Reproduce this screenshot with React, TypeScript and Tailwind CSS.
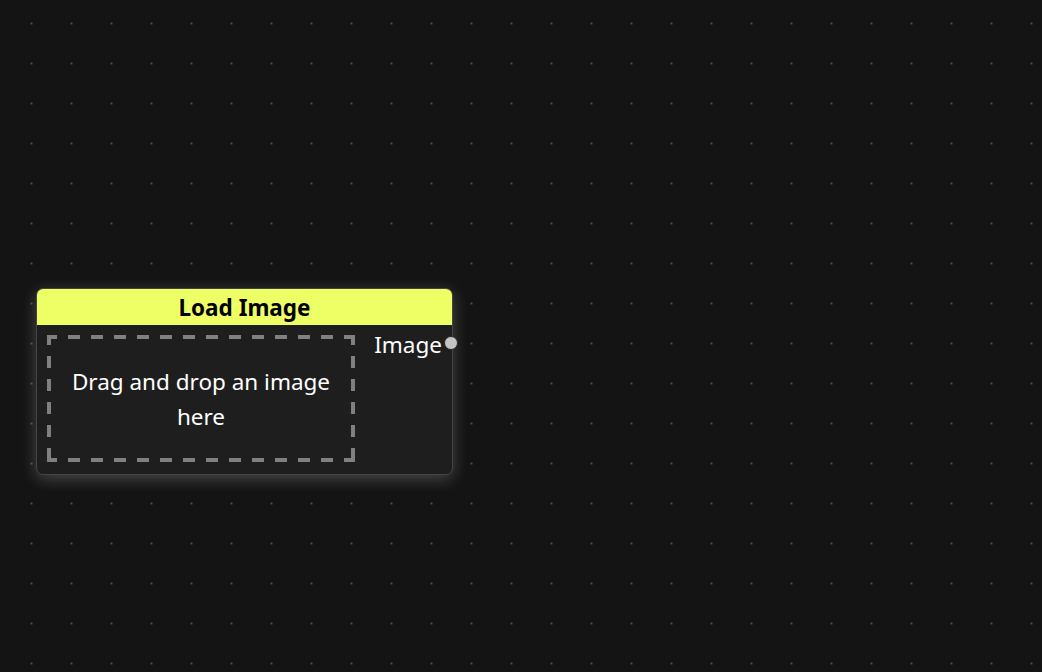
import React from "react";

function DashedFrame() {
  const w = 308;
  const h = 127;
  const s = 4;
  const o = s / 2;
  return (
    <svg className="absolute inset-0 pointer-events-none" width={w} height={h} viewBox={`0 0 ${w} ${h}`}>
      <g stroke="#808080" strokeWidth={s} fill="none" strokeDasharray="12 11" strokeDashoffset="2">
        <path d={`M0 ${o} H${w}`} />
        <path d={`M0 ${h - o} H${w}`} />
        <path d={`M${o} 0 V${h}`} />
        <path d={`M${w - o} 0 V${h}`} />
      </g>
    </svg>
  );
}

export default function App() {
  return (
    <div
      className="relative w-[1042px] h-[672px] overflow-hidden bg-[#141414] bg-[radial-gradient(circle,#4a4a4a_1px,transparent_1.2px)] bg-[length:40px_40px] bg-[position:11.5px_3.5px]"
      style={{ fontFamily: '"Noto Sans", "Open Sans", sans-serif' }}
    >
      <div className="absolute left-[36px] top-[288px] w-[417px] rounded-[7px] border border-[#444444] bg-[#1e1e1e] shadow-[0_4px_16px_rgba(255,255,255,0.22)]">
        <div className="h-[36px] rounded-t-[6px] bg-[#eeff66] flex items-center justify-center pt-[3px]">
          <span className="text-[22.5px] font-bold text-black leading-none">Load Image</span>
        </div>
        <div className="relative flex items-start pt-[10px] pl-[10px] pr-[10px] pb-[12px]">
          <div className="relative w-[308px] h-[127px] flex items-center justify-center px-3">
            <DashedFrame />
            <p className="text-white text-[22.5px] leading-[35px] text-center">
              Drag and drop an image here
            </p>
          </div>
          <div className="flex-1 flex justify-end -mt-[5px]">
            <span className="text-white text-[22.5px] leading-[30px]">Image</span>
          </div>
          <div className="absolute right-[-6px] top-[11px] w-[14px] h-[14px] rounded-full bg-[#c4c4c4] border-[1.5px] border-[#2a2a2a]" />
        </div>
      </div>
    </div>
  );
}
